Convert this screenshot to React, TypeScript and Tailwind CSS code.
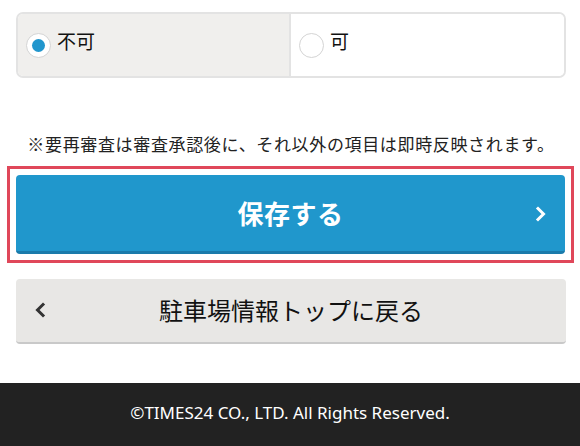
import React from "react";

const jp = { fontFamily: '"Noto Sans CJK JP", "Noto Sans", sans-serif' };

function Chevron({ dir, className }: { dir: "left" | "right"; className?: string }) {
  return (
    <svg width="12" height="16" viewBox="0 0 12 16" className={className} fill="none">
      <path
        d={dir === "right" ? "M3 2.5 L8.5 8 L3 13.5" : "M9 2.5 L3.5 8 L9 13.5"}
        stroke="currentColor"
        strokeWidth="3"
        strokeLinecap="square"
      />
    </svg>
  );
}

function Radio({ checked, label }: { checked: boolean; label: string }) {
  return (
    <label className={`flex items-center h-full pl-[8px] gap-[6px] ${checked ? "bg-[#f0efed]" : "bg-white"}`}>
      <span className="w-[25px] h-[25px] rounded-full bg-white border border-[#d4d4d4] flex items-center justify-center shrink-0">
        {checked && <span className="w-[13px] h-[13px] rounded-full bg-[#2196cd]" />}
      </span>
      <span className="text-[19px] text-[#111] -mt-[8px]">{label}</span>
    </label>
  );
}

export default function App() {
  return (
    <div className="w-[580px] h-[446px] bg-white flex flex-col overflow-hidden" style={jp}>
      <div className="pl-4 pr-[14px] pt-[12px] flex-1">
        <div className="h-[66px] rounded-[7px] border-2 border-[#e3e3e3] overflow-hidden grid grid-cols-2">
          <div className="border-r-2 border-[#e3e3e3]">
            <Radio checked label="不可" />
          </div>
          <Radio checked={false} label="可" />
        </div>

        <p className="mt-[56px] text-[17px] leading-[20px] text-[#222] text-center tracking-[0.65px]">
          ※要再審査は審査承認後に、それ以外の項目は即時反映されます。
        </p>

        <div className="mt-[12px] -ml-[9px] -mr-[8px] border-[3px] border-[#e0475a] p-[6px]">
          <button className="relative w-full h-[79px] rounded-[4px] bg-[#2097cc] border-b-[3px] border-[#1a7bab] text-white flex items-center justify-center">
            <span className="text-[26px] font-bold tracking-[0.5px] -mt-[1px]">保存する</span>
            <Chevron dir="right" className="absolute right-[18px] top-[31px] text-white" />
          </button>
        </div>

        <button className="relative mt-[16px] w-full h-[65px] rounded-[4px] bg-[#e8e7e5] border-b-[2px] border-[#c9c9c9] text-[#111] flex items-center justify-center">
          <Chevron dir="left" className="absolute left-[18px] top-[23px] text-[#333]" />
          <span className="text-[24px] -mt-[2px]">駐車場情報トップに戻る</span>
        </button>
      </div>

      <footer className="h-[63px] bg-[#222] flex items-center justify-center">
        <span className="text-white text-[17px] -mt-[4px]" style={{ fontFamily: '"Noto Sans", sans-serif' }}>
          ©TIMES24 CO., LTD. All Rights Reserved.
        </span>
      </footer>
    </div>
  );
}
